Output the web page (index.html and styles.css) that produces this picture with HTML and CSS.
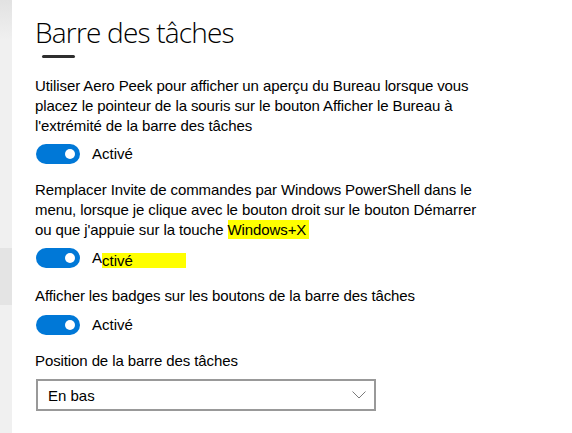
FILE: index.html
```html
<!DOCTYPE html>
<html lang="fr">
<head>
<meta charset="utf-8">
<title>Barre des tâches</title>
<link rel="stylesheet" href="styles.css">
</head>
<body>
<div class="app">
  <div class="side">
    <div class="side-top"></div>
    <div class="side-band"></div>
  </div>
  <main class="content">
    <h1 class="title">Barre des tâches</h1>
    <div class="cut"></div>

    <p class="desc first">Utiliser Aero Peek pour afficher un aperçu du Bureau lorsque vous placez le pointeur de la souris sur le bouton Afficher le Bureau à l'extrémité de la barre des tâches</p>
    <div class="toggle-row"><span class="toggle"><span class="knob"></span></span><span class="state">Activé</span></div>

    <p class="desc">Remplacer Invite de commandes par Windows PowerShell dans le menu, lorsque je clique avec le bouton droit sur le bouton Démarrer ou que j'appuie sur la touche <span class="hl hl-key">Windows+X</span></p>
    <div class="toggle-row"><span class="toggle"><span class="knob"></span></span><span class="state">A<span class="hl hl-state">ctivé</span></span></div>

    <p class="desc third">Afficher les badges sur les boutons de la barre des tâches</p>
    <div class="toggle-row last"><span class="toggle"><span class="knob"></span></span><span class="state">Activé</span></div>

    <p class="desc label">Position de la barre des tâches</p>
    <div class="select">
      <span class="select-text">En bas</span>
      <svg class="chev" width="14" height="8" viewBox="0 0 14 8"><path d="M0.5 0.5 L7 7 L13.5 0.5" fill="none" stroke="#7a7a7a" stroke-width="1"/></svg>
    </div>
  </main>
</div>
</body>
</html>
```

FILE: styles.css
```css
html, body {
  margin: 0;
  padding: 0;
  background: #ffffff;
}
body {
  font-family: "Liberation Sans", "Noto Sans", sans-serif;
  color: #000;
}
.app {
  display: flex;
  width: 572px;
  height: 433px;
  overflow: hidden;
}
.side {
  width: 12px;
  flex: none;
  background: #f0f0f0;
  display: flex;
  flex-direction: column;
}
.side-top {
  height: 40px;
  background: linear-gradient(to bottom, #e2e2e2, #f0f0f0);
}
.side-band {
  margin-top: 208px;
  height: 57px;
  background: #e4e4e4;
}
.content {
  flex: 1;
  padding-left: 23px;
  display: flex;
  flex-direction: column;
  align-items: flex-start;
}
.title {
  margin: 14px 0 0 0;
  font-family: "Open Sans", sans-serif;
  font-weight: 300;
  font-size: 28px;
  line-height: 36px;
  letter-spacing: -0.8px;
}
.cut {
  margin: 5px 0 0 7px;
  width: 33px;
  height: 3px;
  border-radius: 1.5px;
  background: #2e2e2e;
}
.desc {
  margin: 16px 0 0 0;
  font-size: 15px;
  line-height: 20px;
  width: 460px;
  letter-spacing: -0.1px;
}
.desc.first {
  margin-top: 18px;
}
.desc.third {
  margin-top: 18px;
}
.toggle-row {
  margin-top: 8px;
  display: flex;
  align-items: center;
  height: 20px;
}
.toggle-row.last {
  margin-top: 9px;
}
.toggle {
  margin-left: 1px;
  width: 44px;
  height: 20px;
  border-radius: 10px;
  background: #0078d7;
  display: flex;
  align-items: center;
  justify-content: flex-end;
  padding-right: 5px;
  box-sizing: border-box;
}
.knob {
  width: 10px;
  height: 10px;
  border-radius: 50%;
  background: #fff;
}
.state {
  margin-left: 12px;
  font-size: 15px;
  line-height: 20px;
}
.hl {
  background: #ffff00;
}
.hl-key {
  padding: 1px 3px 1px 0;
}
.hl-state {
  display: inline-block;
  padding-right: 53px;
  height: 15px;
  line-height: 16px;
  vertical-align: -3px;
}
.label {
  margin-top: 16px;
}
.select {
  margin-top: 8px;
  margin-left: 1px;
  width: 340px;
  height: 32px;
  box-sizing: border-box;
  border: 2px solid #999;
  display: flex;
  align-items: center;
  justify-content: space-between;
  padding: 0 8px 0 10px;
}
.select-text {
  font-size: 15px;
}
.chev {
  display: block;
}
```
